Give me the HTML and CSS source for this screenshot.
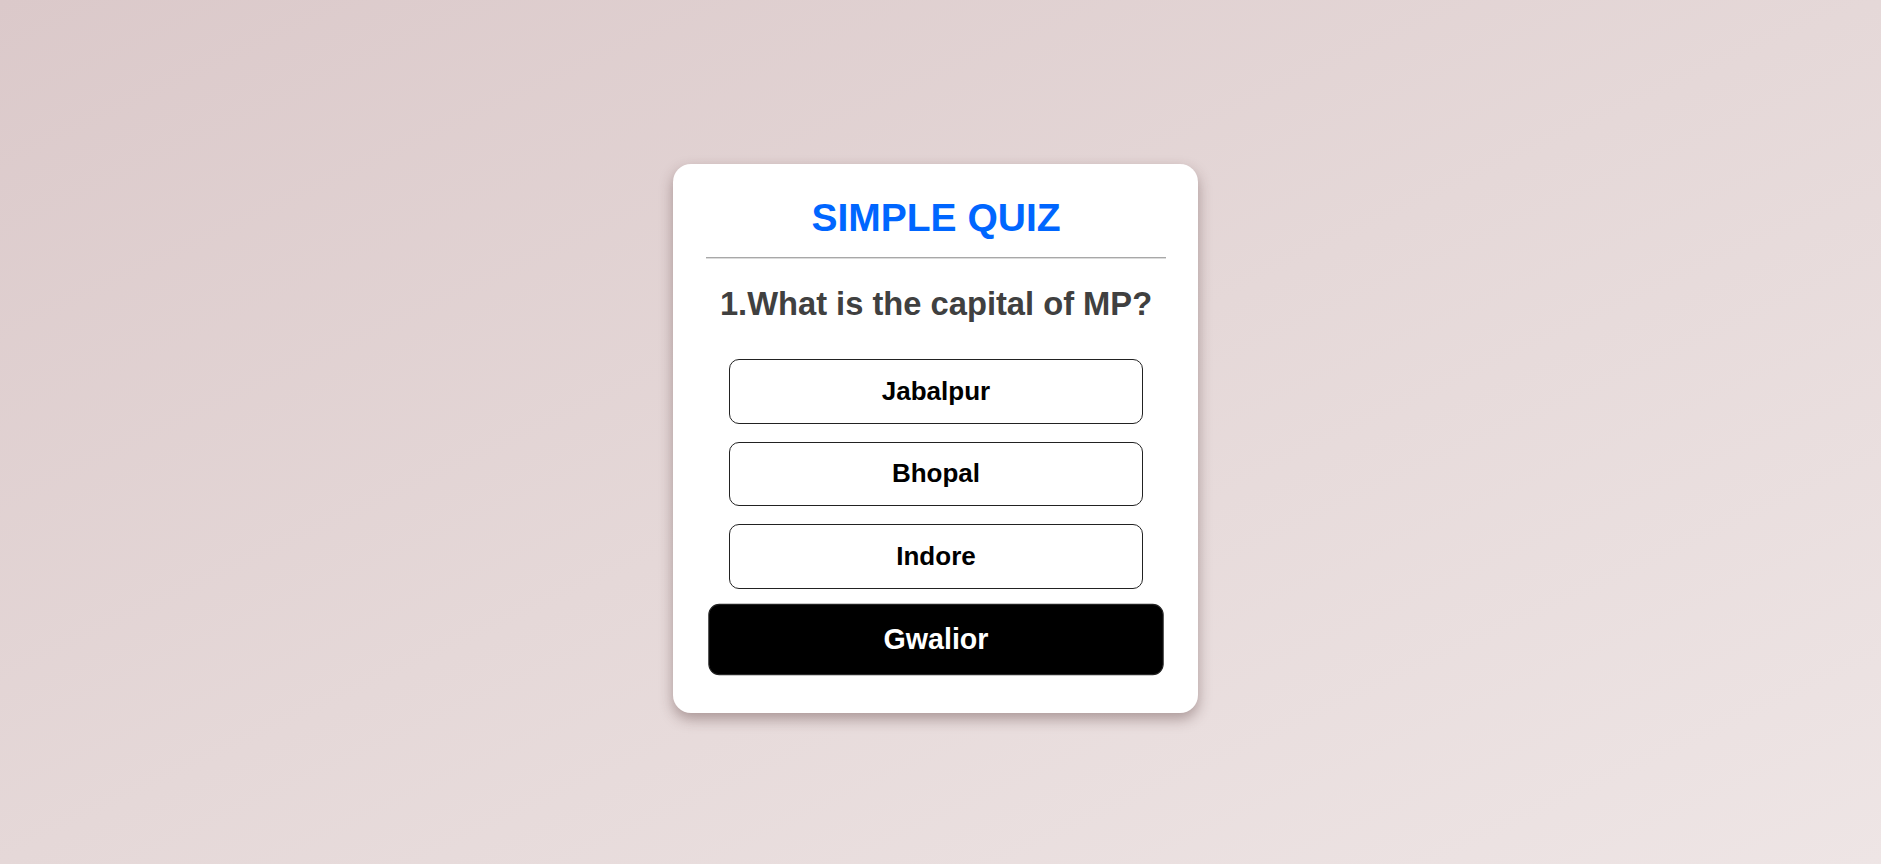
FILE: index.html
```html
<!DOCTYPE html>
<html lang="en">
<head>
<meta charset="utf-8">
<title>Simple Quiz</title>
<link rel="stylesheet" href="styles.css">
</head>
<body>
<main class="page">
  <section class="card">
    <h1 class="title">SIMPLE QUIZ</h1>
    <hr class="divider">
    <h2 class="question">1.What is the capital of MP?</h2>
    <div class="options">
      <button class="option">Jabalpur</button>
      <button class="option">Bhopal</button>
      <button class="option">Indore</button>
      <button class="option option-hover">Gwalior</button>
    </div>
  </section>
</main>
</body>
</html>
```

FILE: styles.css
```css
html, body {
  margin: 0;
  padding: 0;
}

body {
  min-height: 100vh;
  background: linear-gradient(to bottom right, #dbc9ca 0%, #e5d8d8 50%, #eee5e5 100%);
  font-family: "Liberation Sans", Arial, sans-serif;
}

.page {
  display: flex;
  justify-content: center;
  align-items: flex-start;
  padding: 164px 10px 0 0;
  min-height: 100vh;
  box-sizing: border-box;
}

.card {
  width: 460px;
  padding: 32px 32px 42px 33px;
  background: #ffffff;
  border-radius: 18px;
  box-shadow: 0 6px 14px rgba(70, 40, 40, 0.38);
}

.title {
  margin: 0;
  font-size: 39px;
  line-height: 44px;
  font-weight: 700;
  color: #0066ff;
  text-align: center;
}

.divider {
  margin: 17px 0 0;
  height: 0;
  border: 0;
  border-top: 1px solid #a8a8a8;
  border-bottom: 1px solid #dcdcdc;
}

.question {
  margin: 27px 0 0;
  font-size: 32.7px;
  line-height: 36px;
  font-weight: 700;
  color: #404040;
  text-align: center;
}

.options {
  margin-top: 37px;
  display: flex;
  flex-direction: column;
  align-items: center;
  gap: 18px;
}

.option {
  width: 414px;
  height: 64.5px;
  padding: 0;
  background: #ffffff;
  border: 1px solid #222222;
  border-radius: 10px;
  font-family: "Liberation Sans", Arial, sans-serif;
  font-size: 26px;
  font-weight: 700;
  color: #000000;
  text-align: center;
  cursor: pointer;
}

.option-hover {
  background: #000000;
  color: #ffffff;
  transform: scale(1.1);
}
```
